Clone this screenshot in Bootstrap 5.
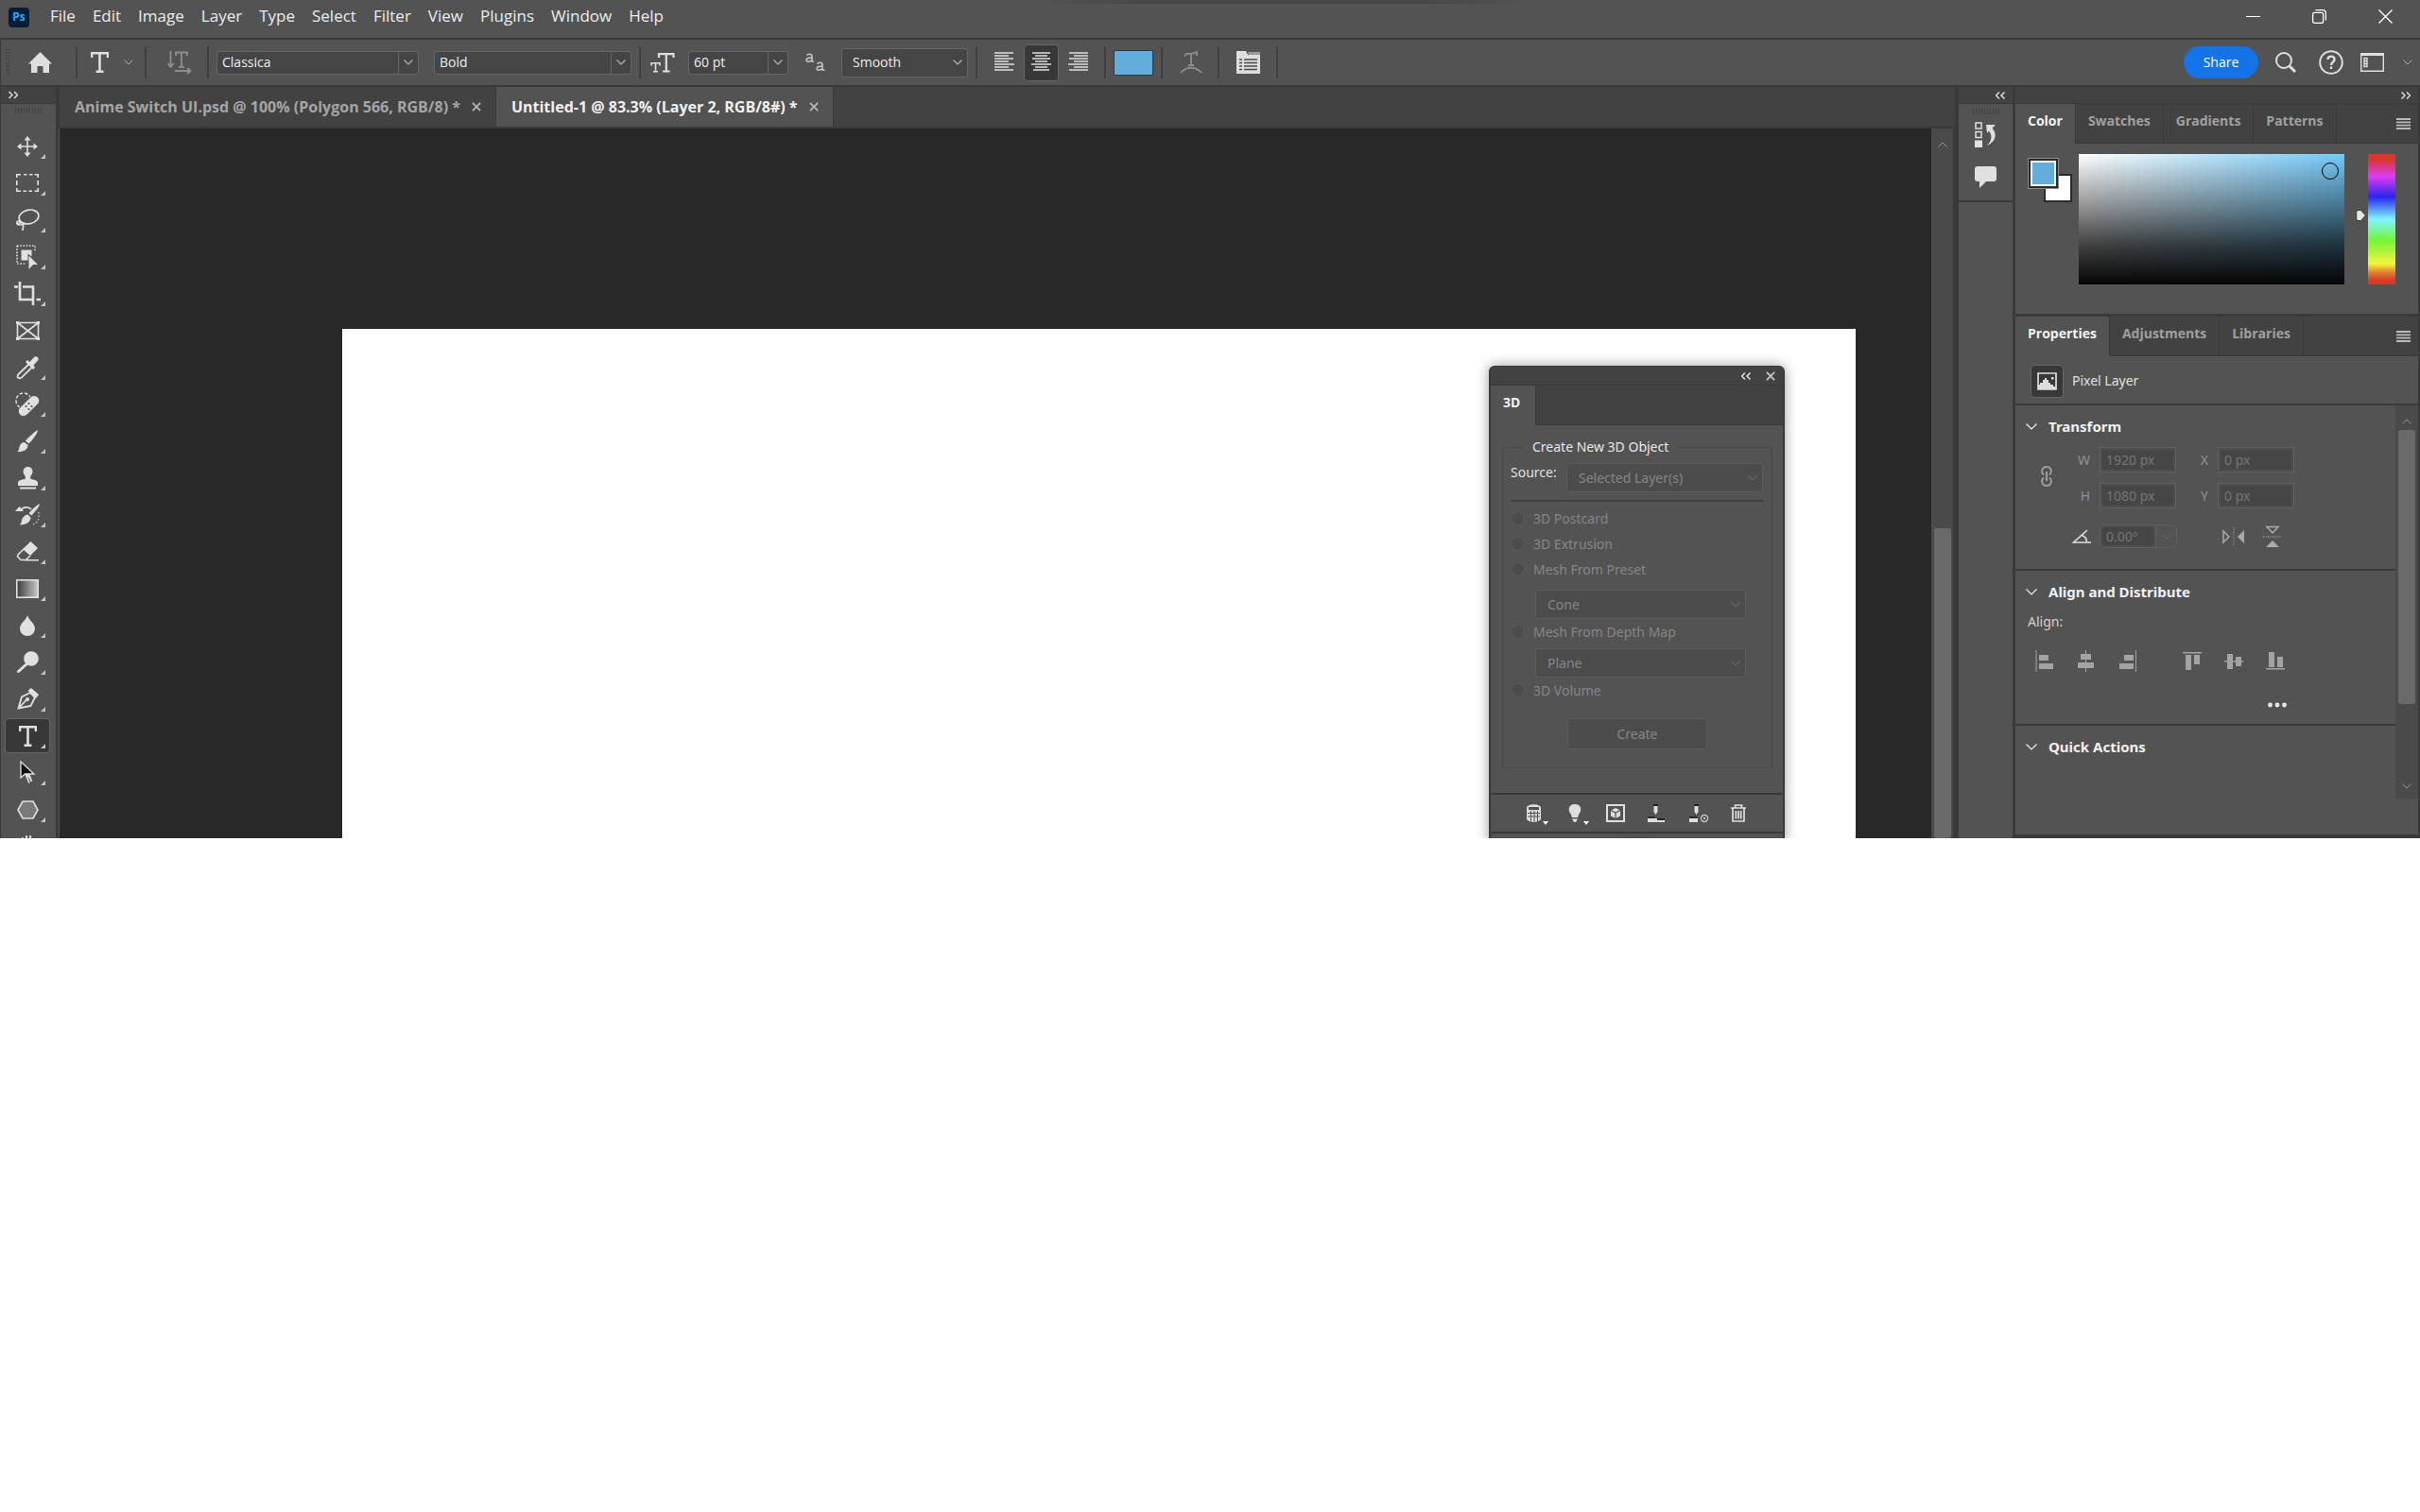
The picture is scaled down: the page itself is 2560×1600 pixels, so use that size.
<!DOCTYPE html>
<html lang="en">
<head>
<meta charset="utf-8">
<meta name="viewport" content="width=device-width, initial-scale=1">
<title>Untitled-1 @ 83.3%</title>
<link href="https://cdn.jsdelivr.net/npm/bootstrap@5.3.0/dist/css/bootstrap.min.css" rel="stylesheet">
<style>
:root{--panel:#535353;--dark:#424242;--line:#3a3a3a;--lit:#e0e0e0;--ui:"Open Sans","Noto Sans",sans-serif;--body:"Noto Sans","Open Sans",sans-serif}
body{background:#fff;font-family:var(--ui);font-size:14px;line-height:20px;color:var(--lit)}
svg{display:block;flex:none;overflow:visible}
button{border:0;padding:0;background:none;color:inherit;display:flex;align-items:center;justify-content:center}
.studio{background:var(--panel)}
.titlebar{height:42px;border-bottom:2px solid var(--line);padding:0 2px 0 9px;position:relative}
.titlebar::before{content:"";position:absolute;left:43%;width:20%;top:0;height:4px;background:linear-gradient(90deg,transparent,#484848 20%,#484848 80%,transparent)}
.logo-ps{width:22px;height:21px;border-radius:4px;background:#001e36;color:#31a8ff;font-size:12px;font-weight:700;line-height:20px;text-align:center}
.main-menu{gap:18px;margin-left:22px;font-size:17px;line-height:34px}
.main-menu a{color:#ececec;text-decoration:none}
.win-btn{width:70px;height:34px}
.optbar{height:50px;border-bottom:2px solid var(--line);padding-left:5px;border-left:1px solid var(--line)}
.vsep{width:2px;height:34px;background:#3f3f3f;flex:none}
.dots-v{width:4px;height:28px;background:repeating-linear-gradient(#414141 0 1px,transparent 1px 3px)}
.o-home{margin:0 25px 0 20px}
.o-type{margin:0 12px 0 14px}
.o-orient{margin:0 16px 0 22px}
.o-size{margin:0 14px 0 10px}
.o-aa{margin:0 16px 0 18px}
.o-align{margin:0 9px 0 10px;gap:2px}
.o-tail{margin:0 16px 0 18px}
.sel{appearance:none;border:1px solid #666;border-radius:3px;background-color:#454545;color:#eee;font-family:var(--ui);font-size:15px;line-height:20px;padding:0 8px 0 5px;height:25px;background-repeat:no-repeat;
background-image:url("data:image/svg+xml,%3Csvg xmlns='http://www.w3.org/2000/svg' width='10' height='6'%3E%3Cpath d='M.5.5 5 5 9.5.5' fill='none' stroke='%23b5b5b5' stroke-width='1.2'/%3E%3C/svg%3E");background-position:right 5px center}
.sel-split{font-size:14px;background-image:url("data:image/svg+xml,%3Csvg xmlns='http://www.w3.org/2000/svg' width='10' height='6'%3E%3Cpath d='M.5.5 5 5 9.5.5' fill='none' stroke='%23b5b5b5' stroke-width='1.2'/%3E%3C/svg%3E"),linear-gradient(#666,#666);background-position:right 5px center,right 20px top;background-size:10px 6px,1px 100%}
.sel-tall{height:31px;padding-left:11px;font-size:14px}
.sel:disabled{opacity:1;color:#868686;border-color:#5c5c5c;background-color:#4c4c4c;font-family:var(--body);font-size:14px;padding-left:12px;height:31px;
background-image:url("data:image/svg+xml,%3Csvg xmlns='http://www.w3.org/2000/svg' width='10' height='6'%3E%3Cpath d='M.5.5 5 5 9.5.5' fill='none' stroke='%23666666' stroke-width='1.2'/%3E%3C/svg%3E")}
.al-btn{width:37px;height:39px;border:1px solid transparent;border-radius:4px}
.al-btn.on,.tool.on{background:#383838;border-color:#666}
.swatch-btn{width:42px;height:27px;background:#62addb;border:1px solid #2a3d4a}
.share{width:79px;height:34px;border-radius:17px;background:#1473e6;color:#fff;font-size:14px}
.strip{height:18px;background:var(--dark);border-bottom:1px solid var(--line);flex:none}
.toolcol{width:62px;contain:size;overflow:hidden;border-left:1px solid var(--line);border-right:3px solid var(--line)}
.grip{height:6px;width:28px;background:repeating-linear-gradient(90deg,#404040 0 1px,transparent 1px 3px)}
.toolcol .grip{margin:4px 0 15px}
.tool{width:48px;height:37px;margin:1px 2px 1px 0;position:relative;border:1px solid transparent;border-radius:4px;flex:none;color:var(--lit)}
.tool.more::after{content:"";position:absolute;right:4px;bottom:4px;border-left:5px solid transparent;border-bottom:5px solid #c4c4c4}
.doc{min-width:0}
.doctabs{height:44px;background:var(--dark);border-bottom:2px solid var(--line);border-left:1px solid var(--line)}
.doctab{height:42px;padding:0 15px 0 16px;gap:12px;font-weight:700;font-size:16px;color:#a5a5a5;border-right:1px solid var(--line)}
.doctab button{color:#b8b8b8}
.doctab.on{background:var(--panel);color:#f0f0f0}
.stage{background:#282828;position:relative;overflow:hidden;margin-left:1px}
.paper{background:#fff;margin:212px 80px 0 299px}
.vscroll{width:25px;background:#4a4a4a;border-right:2px solid var(--line)}
.thumb{background:#6a6a6a;border-radius:3px;width:18px}
.icondock{width:64px;border-left:4px solid var(--line);border-right:3px solid var(--line)}
.icongroup{height:104px;border-bottom:2px solid var(--line);padding-top:5px}
.rightdock{width:428px;border-right:2px solid var(--line)}
.ptabs{height:42px;background:var(--dark);font-weight:700;font-size:14px}
.ptab{height:42px;padding:0 13px 5px 13px;color:#a0a0a0;border-right:1px solid var(--line);border-bottom:1px solid var(--line)}
.ptab.on{background:var(--panel);color:#f2f2f2;border-bottom-color:var(--panel)}
.ptabs-rest{border-bottom:1px solid var(--line);padding-right:8px}
.colorbody{padding:11px 24px 31px 14px;border-bottom:3px solid var(--line)}
.fgbg{width:48px;height:48px;position:relative;margin-top:5px;margin-right:5px}
.fg-chip,.bg-chip{position:absolute;border:2px solid #2b2b2b;width:31px;height:31px}
.fg-chip{left:0;top:0;background:#62addb;box-shadow:inset 0 0 0 2px #fff,0 0 0 1px #8c8c8c}
.bg-chip{left:16px;top:16px;background:#fff;width:30px;height:30px}
.field{height:138px;position:relative;background:linear-gradient(to bottom,rgba(0,0,0,0),rgba(0,0,0,.42) 40%,rgba(0,0,0,.75) 70%,#050505),linear-gradient(to right,#fff,#74c8f8)}
.ring{position:absolute;right:6px;top:9px;width:18px;height:18px;border:1px solid #000;border-radius:50%}
.hue{width:29px;height:138px;background:linear-gradient(#d93a28 0,#d9352d 4%,#de3cf0 17%,#2c24f0 33%,#7ff5ff 50%,#74f53a 66%,#a8f53c 74%,#f5f53a 84%,#dd7f30 91%,#d93a28 97%)}
.layerrow{height:52px;border-bottom:2px solid var(--line);padding:2px 0 0 16px;gap:9px;font-family:var(--body)}
.pix{width:35px;height:35px;border-radius:4px;background:#383838;border:1px solid #686868}
.psec{border-bottom:2px solid var(--line);font-family:var(--body);padding:12px 12px 0 11px}
.psec h2{font-size:15px;line-height:20px;font-weight:700;color:#f0f0f0;margin:0;gap:12px}
.tf{font-family:var(--body);font-size:14px;background:#464646;color:#757575;border:1px solid #606060;box-shadow:inset 0 0 0 2px #4e4e4e;width:81px;height:27px;padding:0 6px;min-width:0}
.tlabel{width:34px;padding-right:10px;text-align:right;color:#929292}
.tlabel2{width:44px}
.pscroll{width:24px;height:416px;background:#4a4a4a}
.pad3d{position:absolute;top:251px;right:155px;width:313px;background:var(--panel);border:2px solid var(--line);border-top-width:1px;border-radius:6px 6px 0 0;box-shadow:0 0 14px rgba(0,0,0,.4);font-family:var(--body)}
.pad3d .strip{height:20px;border-radius:5px 5px 0 0}
.box3d{border:1px solid #494949;margin:13px 11px 26px 12px;padding:0 9px 19px 8px;min-width:0}
.box3d legend{float:none;width:auto;font-size:14px;line-height:20px;margin:0 0 7px 12px;padding:0 9px 0 11px;color:#e8e8e8}
.rad{height:27px;gap:9px;color:#868686}
.rad input{appearance:none;width:15px;height:15px;border:1px solid #5b5b5b;border-radius:50%;background:#4c4c4c;margin:0}
.sub3d{margin:0 18px 0 26px}
.go3d{width:148px;height:33px;margin:16px auto 0 60px;background:#4c4c4c;border:1px solid #5c5c5c;border-radius:3px;color:#868686}
.bar3d{height:43px;border-top:2px solid var(--line);border-bottom:2px solid var(--line);padding-left:34px;gap:16px}
.bar3d button{width:28px;justify-content:flex-start}
</style>
</head>
<body>
<svg width="0" height="0" class="position-absolute" aria-hidden="true"><defs>
<symbol id="chev" viewBox="0 0 12 7"><path d="M.5.5 6 6 11.500.5" fill="none" stroke="currentColor" stroke-width="1.200"/></symbol>
<symbol id="dbl" viewBox="0 0 10 8"><path d="M.5.5 4 4 .5 7.500M6 .5 9.500 4 6 7.500" fill="none" stroke="currentColor" stroke-width="1.500"/></symbol>
<symbol id="burger" viewBox="0 0 15 12"><path d="M0 1h15M0 4.300h15M0 7.600h15M0 11h15" stroke="currentColor" stroke-width="1.800"/></symbol>
<symbol id="tee" viewBox="0 0 19 22"><path d="M1 6V1.300h17V6M9.500 1.300V20.500M5.500 20.700h8" fill="none" stroke="currentColor" stroke-width="2.600"/></symbol>
<symbol id="cross" viewBox="0 0 8 8"><path d="M.7.7l6.600 6.600M7.300.7.7 7.300" stroke="currentColor" stroke-width="1.400"/></symbol>
<linearGradient id="gr"><stop stop-color="#3c3c3c"/><stop offset="1" stop-color="#c8c8c8"/></linearGradient>
</defs></svg>

<div class="studio">
<header class="titlebar d-flex align-items-start">
  <div class="logo-ps mt-2">Ps</div>
  <nav class="main-menu d-flex flex-grow-1"><a href="#">File</a><a href="#">Edit</a><a href="#">Image</a><a href="#">Layer</a><a href="#">Type</a><a href="#">Select</a><a href="#">Filter</a><a href="#">View</a><a href="#">Plugins</a><a href="#">Window</a><a href="#">Help</a></nav>
  <button class="win-btn" aria-label="Minimize"><svg width="15" height="15"><path d="M0 7.500h15" stroke="#fff"/></svg></button>
  <button class="win-btn" aria-label="Restore"><svg width="15" height="15" fill="none" stroke="#fff" stroke-width="1.300"><rect x=".6" y="3.400" width="11" height="11" rx="2"/><path d="M3.500.7H11a3.300 3.300 0 0 1 3.300 3.300v7.500"/></svg></button>
  <button class="win-btn" aria-label="Close"><svg width="15" height="15"><path d="M.5.5l14 14M14.500.5l-14 14" stroke="#fff" stroke-width="1.400"/></svg></button>
</header>

<div class="optbar d-flex align-items-center">
  <div class="dots-v"></div>
  <button class="o-home" aria-label="Home"><svg width="25" height="22" fill="#dedede"><path d="M12.500 0 25 12.500h-3V22h-6.500v-7h-6v7H3v-9.500H0z"/></svg></button>
  <span class="vsep"></span>
  <button class="o-type" aria-label="Type tool preset"><svg width="19" height="22" class="me-3" style="color:#dedede"><use href="#tee"/></svg><svg width="10" height="6" style="color:#b5b5b5"><use href="#chev"/></svg></button>
  <span class="vsep"></span>
  <button class="o-orient" aria-label="Text orientation"><svg width="26" height="24" fill="none" stroke="#8d8d8d" stroke-width="1.800"><path d="M3.500 0v15M.5 13 3.500 17l3-4M9 5V1.500h12V5M15 1.500V17M12 17h6M8 21h16M21 18l3.500 3-3.500 3"/></svg></button>
  <span class="vsep"></span>
  <select class="sel sel-split ms-2" style="width:214px" aria-label="Font family"><option>Classica</option></select>
  <select class="sel sel-split ms-3 me-2" style="width:209px" aria-label="Font style"><option>Bold</option></select>
  <span class="vsep"></span>
  <label class="o-size" for="fsize" aria-label="Font size"><svg width="26" height="21" fill="none" stroke="#dedede"><path stroke-width="2.200" d="M9 5V1.200h15.500V5M16.800 1.200v17.600M13 19.500h7.600"/><path stroke-width="1.600" d="M1 13.500v-2.700h9v2.700M5.500 10.800v8.700M3 19.800h5"/></svg></label>
  <select id="fsize" class="sel sel-split" style="width:106px"><option>60 pt</option></select>
  <label class="o-aa" for="aa" aria-label="Anti-aliasing"><svg width="22" height="20" fill="none" stroke="#c9c9c9" stroke-width="1.500"><path d="M1.500 2.500C3 .5 7 .5 7 4v4.500c0 1 1 1 2 .7M7 5C3.500 5 1 5.500 1 7.500s4.500 2.500 6-.5M12.500 11.500C14 9.500 18 9.500 18 13v4.500c0 1 1 1 2.500.7M18 14c-3.500 0-6 .5-6 2.500s4.500 2.500 6-.5"/></svg></label>
  <select id="aa" class="sel sel-tall me-2" style="width:134px"><option>Smooth</option></select>
  <span class="vsep"></span>
  <div class="o-align d-flex">
    <button class="al-btn" aria-label="Left align text"><svg width="21" height="22" stroke="#dedede" stroke-width="1.300"><path d="M0 1h20M0 4h15M0 7h20M0 10h15M0 13h21M0 16h15M0 19h20"/></svg></button>
    <button class="al-btn on" aria-label="Center text"><svg width="21" height="22" stroke="#dedede" stroke-width="1.300"><path d="M1 1h19M4 4h13M1 7h19M4 10h13M0 13h21M4 16h13M2 19h17"/></svg></button>
    <button class="al-btn" aria-label="Right align text"><svg width="21" height="22" stroke="#dedede" stroke-width="1.300"><path d="M1 1h20M6 4h15M1 7h20M6 10h15M0 13h21M6 16h15M1 19h20"/></svg></button>
  </div>
  <span class="vsep"></span>
  <button class="swatch-btn mx-2" aria-label="Text color"></button>
  <span class="vsep"></span>
  <button class="o-tail" aria-label="Warp text"><svg width="24" height="25" fill="none" stroke="#8d8d8d" stroke-width="1.800"><path d="M5 5.500 7 3c4 0 8-.5 11-2v4M12 2.500V15M9 15h6M1 23c6-7 16-7 22 0"/></svg></button>
  <span class="vsep"></span>
  <button class="o-tail" aria-label="Character panel"><svg width="26" height="24"><path d="M0 0h10l2 4h13v20H0z" fill="#dedede"/><path d="M12 1h13v3H13z" fill="#999"/><path d="M3 9h3M8 9h14M3 12.500h3M8 12.500h14M3 16h3M8 16h14M3 19.500h3M8 19.500h14" stroke="#484848" stroke-width="1.400"/></svg></button>
  <span class="vsep"></span>
  <button class="share ms-auto">Share</button>
  <button style="margin-left:18px" aria-label="Search"><svg width="22" height="22" fill="none" stroke="#dedede" stroke-width="2"><circle cx="9" cy="9" r="8"/><path d="M15 15l6 6" stroke-width="3"/></svg></button>
  <button class="ms-4" aria-label="Help"><svg width="26" height="26" fill="none" stroke="#dedede" stroke-width="2"><circle cx="13" cy="13" r="11.800"/><path d="M9.500 10c0-4.500 7-4.500 7 0 0 3-3.500 2.500-3.500 6M13 17.500V20" stroke-width="2.400"/></svg></button>
  <button class="me-2" style="margin-left:18px" aria-label="Workspace"><svg class="me-3" width="25" height="20" fill="none" stroke="#dedede" stroke-width="1.400"><path d="M.7.7h23.600v18.600H.7z"/><path d="M0 1.500h25" stroke-width="3"/><path d="M4 5.500h3v3H4zM4 8.500h3v3H4zM4 11.500h3v3H4z"/></svg><svg class="ms-1" width="10" height="6" style="color:#b5b5b5"><use href="#chev"/></svg></button>
</div>

<main class="d-flex align-items-stretch">
  <aside class="toolcol d-flex flex-column align-items-center" aria-label="Tools">
    <div class="strip w-100 ps-2 pt-1"><svg width="10" height="9" style="color:#ddd"><use href="#dbl"/></svg></div>
    <div class="grip flex-shrink-0"></div>
    <button class="tool more" aria-label="Move"><svg width="22" height="22"><path d="M11 3v16M3 11h16" stroke="#e0e0e0" stroke-width="1.600"/><path d="M11 0l3.500 4.500h-7zM11 22l-3.500-4.500h7zM0 11l4.500-3.500v7zM22 11l-4.500 3.500v-7z" fill="#e0e0e0"/></svg></button>
    <button class="tool more" aria-label="Marquee"><svg width="24" height="19" fill="none" stroke="#e0e0e0" stroke-width="1.600"><path d="M.8 4V.8H5M8 .8h3.500M14 .8h3.500M19.500.8h3.700V4M23.200 7v5M23.200 15v3.200h-3.700M17 18.200h-3.500M11 18.200H7.500M5 18.200H.8V15M.8 12V7"/></svg></button>
    <button class="tool more" aria-label="Lasso"><svg width="26" height="24" fill="none" stroke="#e0e0e0" stroke-width="1.700"><ellipse cx="14.500" cy="8.500" rx="10.500" ry="7.300" transform="rotate(-12 14.500 8.500)"/><path d="M7 14c-3-2-6-.5-5 1.500s5 2 7 0M2 17c3-3 6-3 6.500-1s-.5 5-.5 7"/></svg></button>
    <button class="tool more" aria-label="Object selection"><svg width="24" height="26"><path d="M1 1h19v6M1 1v19h9" fill="none" stroke="#e0e0e0" stroke-width="1.600" stroke-dasharray="1.600 1.600"/><path d="M5.500 5.500h11v7l-4-3v7h-7z" fill="#e0e0e0"/><path d="M13.500 11.500 23 21h-5l-4.500 5z" fill="#e0e0e0"/></svg></button>
    <button class="tool more" aria-label="Crop"><svg width="28" height="25" fill="none" stroke="#e0e0e0" stroke-width="2.600"><path d="M6 0v19h14M23.500 19H28M20 25V5.500H9M0 5.500h4"/></svg></button>
    <button class="tool" aria-label="Frame"><svg width="25" height="20" fill="none" stroke="#e0e0e0" stroke-width="1.600"><path d="M1.500 1.500h22v17h-22zM1.500 1.500l22 17M23.500 1.500l-22 17"/><path d="M0 1.500h3M22 1.500h3M0 18.500h3M22 18.500h3" stroke-width="3"/></svg></button>
    <button class="tool more" aria-label="Eyedropper"><svg width="24" height="24"><path d="M14 8 3 18.500c-1.500 1.500-2 3.500-.8 4.300s3 .2 4.300-1L17 11.500" fill="none" stroke="#e0e0e0" stroke-width="1.800"/><path d="M10 6l2-2 2.500 2L19 1c3-2.500 6 1.500 4 3.500l-4.500 5L20 12l-2 2z" fill="#e0e0e0"/></svg></button>
    <button class="tool more" aria-label="Healing brush"><svg width="26" height="26"><circle cx="9" cy="9" r="8" fill="none" stroke="#e0e0e0" stroke-width="1.500" stroke-dasharray="3.500 2"/><rect x="1" y="9" width="27" height="11" rx="5.500" transform="rotate(-44 14.500 14.500)" fill="#e0e0e0" stroke="#535353"/><g fill="#484848"><circle cx="11.500" cy="15" r="1"/><circle cx="14.500" cy="12" r="1"/><circle cx="14.500" cy="18" r="1"/><circle cx="17.500" cy="15" r="1"/></g></svg></button>
    <button class="tool more" aria-label="Brush"><svg width="22" height="24" fill="#e0e0e0"><path d="M22 0c0 3-5 10-9.500 14.500L9 11.500C13 7 19 1.500 22 0zM8 13l3.500 3c0 5-5 7.500-11.500 7 2.500-1.500 2-4 3-6.500S6 13 8 13z"/></svg></button>
    <button class="tool more" aria-label="Clone stamp"><svg width="21" height="24" fill="#e0e0e0"><path d="M10.500 0a5 5 0 0 1 5 5c0 3-2.500 4-2.500 7 0 2 8 1 8 5v3H0v-3c0-4 8-3 8-5 0-3-2.500-4-2.500-7a5 5 0 0 1 5-5zM2 21.500h17V23.500H2z"/></svg></button>
    <button class="tool more" aria-label="History brush"><svg width="26" height="24" fill="#e0e0e0"><path d="M26 0c0 3-5 8.500-8.500 12.500l-3-2.500C18 6 23 1.500 26 0zM13.500 11.500l3 3c0 5-5 8-12 8 2.500-1.500 2-4 3-6.500s4-4.500 6-4.500zM0 8l4.500-5L9 8z"/><path d="M6 7c2-4 9-4 11-1" fill="none" stroke="#e0e0e0" stroke-width="1.600"/><path d="M25 9v5c0 4-3 7-6 8" fill="none" stroke="#bbb" stroke-width="1.500" stroke-dasharray="1.500 2"/></svg></button>
    <button class="tool more" aria-label="Eraser"><svg width="23" height="21"><path d="M14.500 0 22 7l-8 8-8-7z" fill="#e0e0e0"/><path d="M7 8 1 14c-1 1.500 0 2.500.5 3L4 19.500h5.500L14 15M8 19.700h15" fill="none" stroke="#e0e0e0" stroke-width="1.600"/></svg></button>
    <button class="tool more" aria-label="Gradient"><svg width="24" height="20"><rect x=".8" y=".8" width="22.400" height="18.400" fill="url(#gr)" stroke="#e0e0e0" stroke-width="1.600"/></svg></button>
    <button class="tool more" aria-label="Blur"><svg width="16" height="22" fill="#e0e0e0"><path d="M8 0c1 5 8 8.500 8 14.200A8 7.800 0 0 1 0 14.200C0 8.500 7 5 8 0z"/></svg></button>
    <button class="tool more" aria-label="Dodge"><svg width="23" height="23"><circle cx="15" cy="8" r="7.800" fill="#e0e0e0"/><path d="M1.500 21.500 11 13" stroke="#e0e0e0" stroke-width="3" stroke-linecap="round"/></svg></button>
    <button class="tool more" aria-label="Pen"><svg width="23" height="23"><path d="M1.500 21.500 5 9.500 14 5l5 5-4.500 9zM2 21l8-8.500" fill="none" stroke="#e0e0e0" stroke-width="1.800"/><circle cx="11" cy="12" r="2" fill="#e0e0e0"/><path d="M15 0l8 7-3 4-8.500-8z" fill="#e0e0e0"/></svg></button>
    <button class="tool more on" aria-label="Type"><svg width="19" height="22"><use href="#tee"/></svg></button>
    <button class="tool more" aria-label="Path selection"><svg width="16" height="26"><path d="M6 14l4 9.500M6 14l3-1 3.500 9" fill="#e0e0e0" stroke="#e0e0e0" stroke-width="1.800"/><path d="M1 1v17l4.500-4H15z" fill="#111" stroke="#e0e0e0" stroke-width="1.300"/></svg></button>
    <button class="tool more" aria-label="Shape"><svg width="23" height="20"><path d="M6 1h11l5 9-5 9H6l-5-9z" fill="#7a7a7a" stroke="#e0e0e0" stroke-width="1.600"/></svg></button>
    <button class="tool more" aria-label="Hand"><svg width="20" height="24" fill="none" stroke="#e0e0e0" stroke-width="2.200" stroke-linecap="round"><path d="M5 14V3M9 12V1M13 12V1M17 14V4M1 13l4 6c2 5 12 5 12-3v-4"/></svg></button>
  </aside>

  <section class="doc flex-grow-1 d-flex flex-column">
    <div class="doctabs d-flex">
      <div class="doctab d-flex align-items-center">Anime Switch UI.psd @ 100% (Polygon 566, RGB/8) *<button aria-label="Close tab"><svg width="10" height="10"><use href="#cross"/></svg></button></div>
      <div class="doctab on d-flex align-items-center">Untitled-1 @ 83.3% (Layer 2, RGB/8#) *<button aria-label="Close tab"><svg width="10" height="10"><use href="#cross"/></svg></button></div>
    </div>
    <div class="d-flex flex-grow-1">
      <div class="stage flex-grow-1 d-flex">
        <div class="paper flex-grow-1"></div>
        <section class="pad3d" aria-label="3D">
          <div class="strip d-flex justify-content-end align-items-center"><button aria-label="Collapse"><svg width="10" height="8" style="transform:scaleX(-1)"><use href="#dbl"/></svg></button><button class="ms-3 me-2" aria-label="Close"><svg width="10" height="10" style="color:#c8c8c8"><use href="#cross"/></svg></button></div>
          <div class="ptabs d-flex"><div class="ptab on d-flex align-items-center pe-3">3D</div><div class="ptabs-rest flex-grow-1"></div></div>
          <fieldset class="box3d">
            <legend>Create New 3D Object</legend>
            <div class="d-flex"><label for="src" style="width:59px">Source:</label><select id="src" class="sel flex-grow-1" disabled><option>Selected Layer(s)</option></select></div>
            <div class="vsep w-100 mb-1 mt-2" style="height:2px"></div>
            <label class="rad d-flex align-items-center"><input type="radio" name="m" disabled>3D Postcard</label>
            <label class="rad d-flex align-items-center"><input type="radio" name="m" disabled>3D Extrusion</label>
            <label class="rad d-flex align-items-center"><input type="radio" name="m" disabled>Mesh From Preset</label>
            <div class="d-flex pt-1 mt-1"><select class="sel sub3d flex-grow-1" disabled aria-label="Preset"><option>Cone</option></select></div>
            <label class="rad d-flex align-items-center"><input type="radio" name="m" disabled>Mesh From Depth Map</label>
            <div class="d-flex pt-1"><select class="sel sub3d flex-grow-1" disabled aria-label="Depth map"><option>Plane</option></select></div>
            <label class="rad d-flex align-items-center"><input type="radio" name="m" disabled>3D Volume</label>
            <button class="go3d" disabled>Create</button>
          </fieldset>
          <div class="bar3d d-flex align-items-center">
            <button aria-label="Environment"><svg width="28" height="20"><path d="M4 4c0-5 15-5 15 0v11c0 5-15 5-15 0z" fill="#dedede"/><path d="M6 3h11v3H6z" fill="#505050"/><path d="M5 9.500h13M5 13h13M8.500 7v11M12 7v11M15.500 7v11" stroke="#505050"/><path d="M21 18h6l-3 4z" fill="#fff"/></svg></button>
            <button aria-label="Light"><svg width="28" height="20"><path d="M11 0c8 0 7 8 4.500 10L14 14H8l-1.500-4C4 8 3 0 11 0zM8 15.500h6L12 19h-2z" fill="#dedede"/><path d="M20 18h6l-3 4z" fill="#fff"/></svg></button>
            <button aria-label="Render"><svg width="20" height="19"><path d="M1 1h18v17H1z" fill="none" stroke="#dedede" stroke-width="2"/><path d="M10 4l5 2.500v6L10 15l-5-2.500v-6z" fill="#dedede"/><path d="M5 6.500 10 9l5-2.500M10 9v6" fill="none" stroke="#505050" stroke-width="1.200"/></svg></button>
            <button aria-label="Print 3D"><svg width="20" height="20"><path d="M6 0h5v2H6z" fill="#222"/><path d="M6.500 2h4v6L8.500 11l-2-3zM0 15h9l3 2h6v2H0z" fill="#dedede"/><path d="M0 13h8v2H0zM10 15h8v2h-8z" fill="#2a2a2a"/></svg></button>
            <button aria-label="Cancel print"><svg width="21" height="20"><path d="M5 0h5v2H5z" fill="#222"/><path d="M5.500 2h4v6L7.500 11l-2-3zM0 15h9v4H0z" fill="#dedede"/><path d="M0 13h8v2H0z" fill="#2a2a2a"/><circle cx="16" cy="15" r="3.500" fill="#333" stroke="#ccc" stroke-width="1.400"/><path d="M14.500 13.500l3 3M17.500 13.500l-3 3" stroke="#ddd"/></svg></button>
            <button aria-label="Delete"><svg width="16" height="19" fill="none" stroke="#dedede" stroke-width="1.700"><path d="M0 4h16M4.500 3.500V1h7v2.500M2 4v14h12V4M5.300 7v8.500M8 7v8.500M10.700 7v8.500"/></svg></button>
          </div>
          <div class="d-flex justify-content-center" style="height:8px"><div class="grip mt-1"></div></div>
        </section>
      </div>
      <div class="vscroll d-flex flex-column align-items-center"><svg style="margin:14px 0 auto;color:#999" width="10" height="6"><use href="#chev" transform="rotate(180 5 3)"/></svg><div class="thumb" style="height:328px"></div></div>
    </div>
  </section>

  <aside class="icondock">
    <div class="strip d-flex justify-content-end align-items-center pe-2"><svg width="10" height="8" style="transform:scaleX(-1);color:#ddd"><use href="#dbl"/></svg></div>
    <div class="icongroup d-flex flex-column align-items-center">
      <div class="grip mb-2"></div>
      <button class="mb-3 pb-1" aria-label="History"><svg width="23" height="27"><path d="M1 1h6v6H1zM1 10.500h6v6H1z" fill="none" stroke="#e0e0e0" stroke-width="1.500"/><path d="M0 19.500h8V27H0z" fill="#e0e0e0"/><path d="M12 3h10l-3.500 3.500c6 7 3 15-5.500 18.500 5-5 6-10 2-15.500L13 12z" fill="#e0e0e0"/></svg></button>
      <button aria-label="Comments"><svg width="23" height="23" fill="#e0e0e0"><path d="M3 0h17a3 3 0 0 1 3 3v10a3 3 0 0 1-3 3h-8l-7 7v-7H3a3 3 0 0 1-3-3V3a3 3 0 0 1 3-3z"/></svg></button>
    </div>
  </aside>

  <aside class="rightdock">
    <div class="strip d-flex justify-content-end align-items-center pe-2"><svg width="10" height="8" style="color:#ddd"><use href="#dbl"/></svg></div>
    <div class="ptabs d-flex"><div class="ptab on d-flex align-items-center">Color</div><div class="ptab d-flex align-items-center">Swatches</div><div class="ptab d-flex align-items-center">Gradients</div><div class="ptab d-flex align-items-center">Patterns</div><div class="ptabs-rest flex-grow-1 d-flex justify-content-end"><button aria-label="Panel menu"><svg width="15" height="12" style="color:#bbb"><use href="#burger"/></svg></button></div></div>
    <div class="colorbody d-flex">
      <div class="fgbg"><div class="bg-chip"></div><div class="fg-chip"></div></div>
      <div class="field flex-grow-1"><div class="ring"></div></div>
      <svg width="11" height="12" style="margin:59px 2px 0 12px"><path d="M2 .5h3.500L10.500 6l-5 5.500H2L.7 10V2z" fill="#e4e4e4" stroke="#333"/></svg>
      <div class="hue"></div>
    </div>
    <div class="ptabs d-flex"><div class="ptab on d-flex align-items-center">Properties</div><div class="ptab d-flex align-items-center">Adjustments</div><div class="ptab d-flex align-items-center">Libraries</div><div class="ptabs-rest flex-grow-1 d-flex justify-content-end"><button aria-label="Panel menu"><svg width="15" height="12" style="color:#bbb"><use href="#burger"/></svg></button></div></div>
    <div class="layerrow d-flex align-items-center"><div class="pix d-flex align-items-center justify-content-center"><svg width="21" height="19"><path d="M1 1h19v17H1z" fill="none" stroke="#ddd" stroke-width="1.700"/><path d="M1 18v-5h2v-2h3V8h2V6h2v2h2v3h2v2h3v2h3v3zM15 5h2.500v2.500H15z" fill="#ddd"/></svg></div>Pixel Layer</div>
    <div class="d-flex">
      <div class="flex-grow-1">
        <section class="psec" style="height:175px">
          <h2 class="d-flex align-items-center"><svg width="12" height="7"><use href="#chev"/></svg>Transform</h2>
          <div class="d-flex align-items-center mt-2">
            <svg width="12" height="22" class="mx-3" fill="none" stroke="#9a9a9a" stroke-width="2"><path d="M3 9.500C0 7.500.5 1 6 1s6 6.500 3 8.500M3 12.500C0 14.500.5 21 6 21s6-6.500 3-8.500"/><path d="M6 6v10"/></svg>
            <div class="d-flex flex-column pt-1 flex-grow-1" style="gap:11px">
              <div class="d-flex align-items-center"><label for="w" class="tlabel">W</label><input id="w" class="tf" value="1920 px" disabled><label for="x" class="tlabel tlabel2">X</label><input id="x" class="tf" value="0 px" disabled></div>
              <div class="d-flex align-items-center"><label for="h" class="tlabel">H</label><input id="h" class="tf" value="1080 px" disabled><label for="y" class="tlabel tlabel2">Y</label><input id="y" class="tf" value="0 px" disabled></div>
            </div>
          </div>
          <div class="d-flex align-items-center" style="margin:17px 0 0 49px">
            <svg width="20" height="15" fill="none" stroke="#dedede" stroke-width="1.600"><path d="M20 14H1.500L16 1M10.500 6.500c4 1.500 5 4 5 7.500"/></svg>
            <input class="tf rounded-start" style="width:60px;height:25px;margin-left:9px" value="0.00º" disabled aria-label="Angle"><button class="border border-start-0 rounded-end" style="width:22px;height:25px;--bs-border-color:#606060;color:#6b6b6b" disabled aria-label="Angles"><svg width="10" height="6"><use href="#chev"/></svg></button>
            <button style="margin:0 20px 0 48px" aria-label="Flip horizontal"><svg width="23" height="20"><path d="M1 4l6 6-6 6z" fill="none" stroke="#aaa" stroke-width="1.500"/><path d="M12 0v20" stroke="#aaa" stroke-dasharray="1 1.500"/><path d="M23 3v14l-7-7z" fill="#aaa"/></svg></button>
            <button aria-label="Flip vertical"><svg width="20" height="24"><path d="M4 1.500h12L10 8z" fill="none" stroke="#aaa" stroke-width="1.500"/><path d="M0 12h20" stroke="#ccc" stroke-dasharray="1 1.500"/><path d="M3 23h14l-7-7z" fill="#aaa"/></svg></button>
          </div>
        </section>
        <section class="psec" style="height:164px">
          <h2 class="d-flex align-items-center"><svg width="12" height="7"><use href="#chev"/></svg>Align and Distribute</h2>
          <div class="mt-2 pt-1" style="padding-left:2px;color:#d0d0d0">Align:</div>
          <div class="d-flex" style="margin:20px 0 0 10px;gap:24px">
            <button aria-label="Align left"><svg width="20" height="23" fill="#a3a3a3"><path d="M.5 0h1v23h-1zM4 5h10v6H4zM4 14h15v6H4z"/></svg></button>
            <button aria-label="Align centers"><svg width="20" height="23" fill="#a3a3a3"><path d="M9 0h1v23H9zM4 4h11v6H4zM1 13h17v6H1z"/></svg></button>
            <button aria-label="Align right"><svg width="20" height="23" fill="#a3a3a3"><path d="M18 0h1v23h-1zM6 5h10v6H6zM1 14h15v6H1z"/></svg></button>
            <button style="margin-left:24px" aria-label="Align top"><svg width="20" height="23" fill="#a3a3a3"><path d="M0 2h20v1.500H0zM3 5h6v16H3zM12 5h6v10h-6z"/></svg></button>
            <button aria-label="Align middle"><svg width="20" height="23" fill="#a3a3a3"><path d="M0 11h20v1.500H0zM3 4h6v16H3zM12 7h6v10h-6z"/></svg></button>
            <button aria-label="Align bottom"><svg width="20" height="23" fill="#a3a3a3"><path d="M0 19h20v1.500H0zM3 2h6v16H3zM12 7h6v11h-6z"/></svg></button>
          </div>
          <button style="margin:32px 0 0 256px" aria-label="More options"><svg width="20" height="6" fill="#e8e8e8"><circle cx="2.500" cy="3" r="2.400"/><circle cx="10" cy="3" r="2.400"/><circle cx="17.500" cy="3" r="2.400"/></svg></button>
        </section>
        <section class="psec border-0" style="height:115px">
          <h2 class="d-flex align-items-center"><svg width="12" height="7"><use href="#chev"/></svg>Quick Actions</h2>
        </section>
      </div>
      <div class="pscroll d-flex flex-column align-items-center" style="color:#999"><svg style="margin:14px 0 6px" width="10" height="6"><use href="#chev" transform="rotate(180 5 3)"/></svg><div class="thumb" style="height:290px"></div><svg class="mt-auto mb-2" width="10" height="10"><use href="#chev"/></svg></div>
    </div>
    <div style="height:4px;background:var(--line)"></div>
  </aside>
</main>
</div>
<script src="https://cdn.jsdelivr.net/npm/bootstrap@5.3.0/dist/js/bootstrap.bundle.min.js"></script>
</body>
</html>
